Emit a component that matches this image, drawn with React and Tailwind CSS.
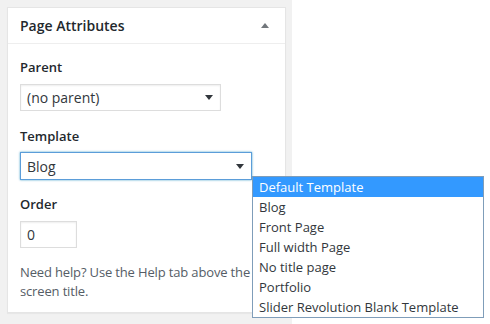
import React from "react";

const font = { fontFamily: '"Open Sans", "Noto Sans", sans-serif' };

function Arrow({ up = false, className = "" }) {
  return (
    <svg width="8" height="5" viewBox="0 0 8 5" className={className}>
      {up ? <polygon points="0,5 8,5 4,0" fill="#72777c" /> : <polygon points="0,0 8,0 4,5" fill="#32373c" />}
    </svg>
  );
}

export default function App() {
  const options = [
    "Default Template",
    "Blog",
    "Front Page",
    "Full width Page",
    "No title page",
    "Portfolio",
    "Slider Revolution Blank Template",
  ];
  return (
    <div className="relative flex h-[324px] w-[490px] overflow-hidden bg-white" style={font}>
      <div className="w-[292px] bg-[#f1f1f1] pl-[7px] pt-[7px]">
        <div className="w-[279px] h-[306px] border border-[#e5e5e5] bg-white shadow-[0_1px_1px_rgba(0,0,0,0.04)]">
          <div className="flex h-[36px] items-center justify-between border-b border-[#eeeeee] pl-[12px] pr-[16px]">
            <span className="text-[14px] font-semibold text-[#23282d]">Page Attributes</span>
            <Arrow up />
          </div>
          <div className="px-[12px] pt-[13px] text-[13px] text-[#23282d]">
            <div className="h-[20px] leading-[20px] font-semibold">Parent</div>
            <div className="mt-[7px] flex h-[27px] w-[201px] items-center justify-between border border-[#dddddd] pl-[6px] pr-[7px] text-[14px] text-[#32373c] shadow-[inset_0_1px_2px_rgba(0,0,0,0.07)]">
              <span>(no parent)</span>
              <Arrow />
            </div>
            <div className="mt-[15px] h-[20px] leading-[20px] font-semibold">Template</div>
            <div className="mt-[6px] flex h-[28px] w-[232px] items-center justify-between border border-[#5b9dd9] pl-[6px] pr-[7px] text-[14px] text-[#32373c] shadow-[0_0_2px_rgba(30,140,190,0.8)]">
              <span>Blog</span>
              <Arrow />
            </div>
            <div className="mt-[14px] h-[20px] leading-[20px] font-semibold">Order</div>
            <div className="mt-[7px] flex h-[27px] w-[57px] items-center border border-[#dddddd] pl-[6px] text-[14px] text-[#32373c] shadow-[inset_0_1px_2px_rgba(0,0,0,0.07)]">
              0
            </div>
            <p className="mt-[15px] text-[13px] leading-[19px] tracking-[-0.15px] text-[#555d66]">
              Need help? Use the Help tab above the screen title.
            </p>
          </div>
        </div>
      </div>
      <div className="flex-1 bg-white" />
      <div className="absolute left-[252px] top-[176px] w-[232px] border border-[#7f9db9] bg-white text-[13px] text-[#32373c]">
        {options.map((o, i) => (
          <div
            key={o}
            className={`h-[20px] pl-[6px] leading-[20px] whitespace-nowrap ${i === 0 ? "bg-[#3399ff] text-white" : ""}`}
          >
            {o}
          </div>
        ))}
      </div>
    </div>
  );
}
